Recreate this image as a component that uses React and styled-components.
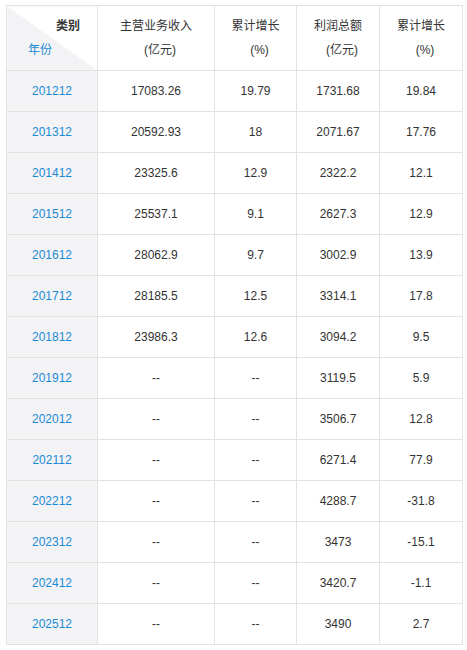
import styled, { createGlobalStyle } from "styled-components";

const GlobalStyle = createGlobalStyle`
	body {
		margin: 0;
		background: #fff;
		font-family: "Liberation Sans", "Noto Sans CJK SC", sans-serif;
	}
`;

const Page = styled.div`
	padding: 5px 0 0 6px;
`;

const Table = styled.table`
	border-collapse: collapse;
	table-layout: fixed;
	width: 457px;
	font-size: 12px;
	color: #333;
`;

const Col = styled.col`
	width: ${(p) => p.$w}px;
`;

const HeadCell = styled.th`
	border: 1px solid #e2e2e2;
	height: 64px;
	padding: 0;
	font-weight: normal;
	line-height: 24px;
	text-align: center;
	color: #333;
`;

const CornerCell = styled(HeadCell)`
	background: linear-gradient(to top right, #f3f3f5 50%, #fff 50%);
`;

const CornerTop = styled.div`
	text-align: right;
	padding-right: 17px;
	font-weight: bold;
	color: #333;
`;

const CornerBottom = styled.div`
	text-align: left;
	padding-left: 21px;
	color: #1a8ad6;
`;

const Unit = styled.span`
	display: block;
	padding-left: 8px;
`;

const Cell = styled.td`
	border: 1px solid #e2e2e2;
	height: 40px;
	padding: 0;
	text-align: center;
	color: ${(p) => (p.$year ? "#1a8ad6" : "#333")};
	background: ${(p) => (p.$year ? "#f3f3f5" : "#fff")};
`;

const colWidths = [91, 117, 82, 83, 83];

const rows = [
	["201212", "17083.26", "19.79", "1731.68", "19.84"],
	["201312", "20592.93", "18", "2071.67", "17.76"],
	["201412", "23325.6", "12.9", "2322.2", "12.1"],
	["201512", "25537.1", "9.1", "2627.3", "12.9"],
	["201612", "28062.9", "9.7", "3002.9", "13.9"],
	["201712", "28185.5", "12.5", "3314.1", "17.8"],
	["201812", "23986.3", "12.6", "3094.2", "9.5"],
	["201912", "--", "--", "3119.5", "5.9"],
	["202012", "--", "--", "3506.7", "12.8"],
	["202112", "--", "--", "6271.4", "77.9"],
	["202212", "--", "--", "4288.7", "-31.8"],
	["202312", "--", "--", "3473", "-15.1"],
	["202412", "--", "--", "3420.7", "-1.1"],
	["202512", "--", "--", "3490", "2.7"],
];

const headers = [
	["主营业务收入", "(亿元)"],
	["累计增长", "(%)"],
	["利润总额", "(亿元)"],
	["累计增长", "(%)"],
];

export default function App() {
	return (
		<Page>
			<GlobalStyle />
			<Table>
				<colgroup>
					{colWidths.map((w, i) => (
						<Col key={i} $w={w} />
					))}
				</colgroup>
				<thead>
					<tr>
						<CornerCell>
							<CornerTop>类别</CornerTop>
							<CornerBottom>年份</CornerBottom>
						</CornerCell>
						{headers.map(([title, unit], i) => (
							<HeadCell key={i}>
								{title}
								<Unit>{unit}</Unit>
							</HeadCell>
						))}
					</tr>
				</thead>
				<tbody>
					{rows.map(([year, ...vals]) => (
						<tr key={year}>
							<Cell $year>{year}</Cell>
							{vals.map((v, i) => (
								<Cell key={i}>{v}</Cell>
							))}
						</tr>
					))}
				</tbody>
			</Table>
		</Page>
	);
}
